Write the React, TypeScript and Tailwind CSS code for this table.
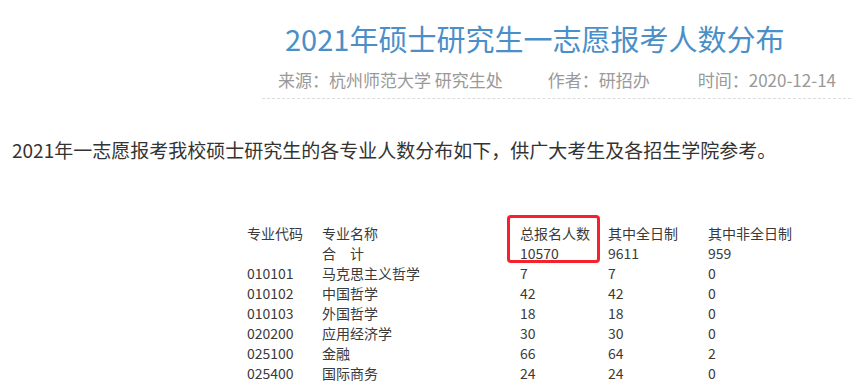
import React from 'react';

const rows: [string, string, string, string, string][] = [
  ['010101', '马克思主义哲学', '7', '7', '0'],
  ['010102', '中国哲学', '42', '42', '0'],
  ['010103', '外国哲学', '18', '18', '0'],
  ['020200', '应用经济学', '30', '30', '0'],
  ['025100', '金融', '66', '64', '2'],
  ['025400', '国际商务', '24', '24', '0'],
];

const Row: React.FC<{ cells: string[] }> = ({ cells }) => (
  <div className="grid grid-cols-[75px_198px_88px_100px_120px] h-[20px] leading-[20px]">
    {cells.map((c, i) => (
      <div key={i} className="whitespace-pre">{c}</div>
    ))}
  </div>
);

const App: React.FC = () => {
  return (
    <div className="w-[851px] h-[382px] overflow-hidden bg-white font-['Noto_Sans_CJK_SC','Noto_Sans',sans-serif]">
      {/* header */}
      <div className="ml-[262px] border-b border-dashed border-[#dcdcdc]">
        <h1 className="pl-[23px] pt-[18px] text-[29px] leading-[40px] text-[#4a8fc8]">
          2021年硕士研究生一志愿报考人数分布
        </h1>
        <div className="mt-[11px] flex justify-end pr-[15px] pb-[7px] text-[17px] leading-[22px] text-[#999]">
          <span>来源：杭州师范大学 研究生处</span>
          <span className="ml-[45px]">作者：研招办</span>
          <span className="ml-[48px]">时间：2020-12-14</span>
        </div>
      </div>

      <p className="mt-[36px] pl-[12px] text-[19px] leading-[30px] text-[#333]">
        2021年一志愿报考我校硕士研究生的各专业人数分布如下，供广大考生及各招生学院参考。
      </p>

      {/* table */}
      <div className="relative mt-[58px] pl-[247px] text-[14px] text-[#3a3a3a]">
        <Row cells={['专业代码', '专业名称', '总报名人数', '其中全日制', '其中非全日制']} />
        <Row cells={['', '合\u3000计', '10570', '9611', '959']} />
        {rows.map((r) => (
          <Row key={r[0]} cells={r} />
        ))}
        <div className="absolute left-[507px] top-[-8px] w-[93px] h-[48px] rounded-[4px] border-[3px] border-[#f5222d]" />
      </div>
    </div>
  );
};

export default App;
